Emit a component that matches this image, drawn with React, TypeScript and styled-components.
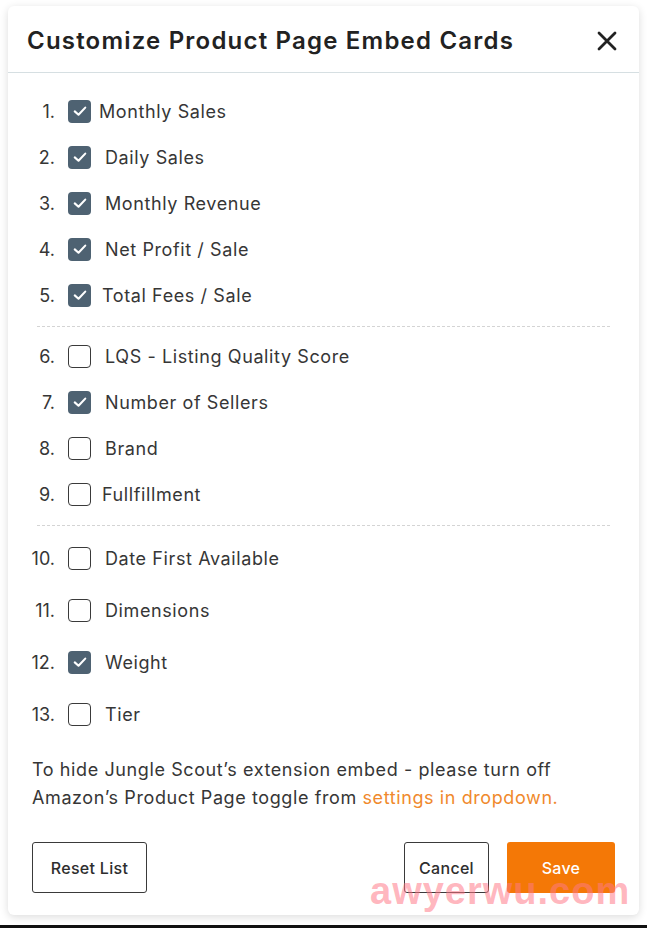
import React, { useState } from "react";
import styled, { createGlobalStyle } from "styled-components";

const GlobalStyle = createGlobalStyle`
  html, body {
    margin: 0;
    padding: 0;
    background: #ffffff;
  }

  body {
    font-family: Inter, "Open Sans", "Liberation Sans", sans-serif;
    color: #333;
  }
`;

const Page = styled.div`
  position: relative;
  width: 647px;
  height: 928px;
  box-sizing: border-box;
  padding: 6px 8px 0 8px;
  border-bottom: 3px solid #111;
  overflow: hidden;
`;

const Card = styled.div`
  width: 631px;
  height: 909px;
  box-sizing: border-box;
  background: #fff;
  border-radius: 6px;
  box-shadow: 0 2px 8px rgba(0, 0, 0, 0.14);
  display: flex;
  flex-direction: column;
`;

const Header = styled.header`
  height: 67px;
  box-sizing: border-box;
  display: flex;
  align-items: center;
  justify-content: space-between;
  padding: 3px 20px 0 19px;
  border-bottom: 1px solid #d6dfe2;

  h1 {
    margin: 0;
    font-size: 24px;
    font-weight: 600;
    color: #222;
    letter-spacing: 1.2px;
  }
`;

const CloseButton = styled.button`
  all: unset;
  width: 24px;
  height: 24px;
  display: grid;
  place-items: center;
  cursor: pointer;
`;

const List = styled.div`
  padding: 15px 29px 0 22px;
  display: flex;
  flex-direction: column;
`;

const Group = styled.div<{ $rowHeight: number }>`
  display: flex;
  flex-direction: column;

  & > label {
    height: ${({ $rowHeight }) => $rowHeight}px;
  }
`;

const Divider = styled.hr`
  margin: 8px 0 6px 7px;
  border: none;
  border-top: 1px dashed #d4d4d4;
`;

const Row = styled.label<{ $indent: number }>`
  display: flex;
  align-items: center;
  font-size: 18px;
  letter-spacing: 0.6px;
  color: #363636;
  cursor: pointer;

  .num {
    width: 25px;
    text-align: right;
    margin-right: 13px;
    letter-spacing: 0;
  }

  .text {
    margin-left: ${({ $indent }) => $indent}px;
  }
`;

const Box = styled.span<{ $checked: boolean }>`
  width: 23px;
  height: 23px;
  box-sizing: border-box;
  border-radius: 4px;
  display: grid;
  place-items: center;
  background: ${({ $checked }) => ($checked ? "#4e6272" : "#fff")};
  border: ${({ $checked }) =>
    $checked ? "none" : "1.5px solid #3a3a3a"};
`;

const Note = styled.p`
  margin: 16px 24px 0 24px;
  font-size: 18px;
  line-height: 28px;
  letter-spacing: 0.6px;
  color: #363636;

  a {
    color: #f0892c;
    text-decoration: none;
  }
`;

const Footer = styled.footer`
  margin-top: 30px;
  padding: 0 24px;
  display: flex;
  align-items: center;
  gap: 18px;

  .spacer {
    flex: 1;
  }
`;

const Button = styled.button<{ $primary?: boolean; $width: number }>`
  width: ${({ $width }) => $width}px;
  height: 51px;
  border-radius: 3px;
  font-family: inherit;
  font-size: 16px;
  font-weight: 500;
  letter-spacing: 0.3px;
  cursor: pointer;
  color: ${({ $primary }) => ($primary ? "#fff" : "#2e2e2e")};
  background: ${({ $primary }) => ($primary ? "#f47806" : "#fff")};
  border: ${({ $primary }) => ($primary ? "none" : "1.5px solid #3a3a3a")};
`;

const Watermark = styled.div`
  position: absolute;
  left: 370px;
  top: 870px;
  font-family: "Liberation Sans", Arial, sans-serif;
  font-size: 38px;
  font-weight: 700;
  color: rgba(255, 120, 135, 0.55);
  letter-spacing: 1px;
  pointer-events: none;
`;

type Item = { label: string; checked: boolean; indent: number };

const initialGroups: { rowHeight: number; items: Item[] }[] = [
  {
    rowHeight: 46,
    items: [
      { label: "Monthly Sales", checked: true, indent: 8 },
      { label: "Daily Sales", checked: true, indent: 14 },
      { label: "Monthly Revenue", checked: true, indent: 14 },
      { label: "Net Profit / Sale", checked: true, indent: 14 },
      { label: "Total Fees / Sale", checked: true, indent: 11 },
    ],
  },
  {
    rowHeight: 46,
    items: [
      { label: "LQS - Listing Quality Score", checked: false, indent: 14 },
      { label: "Number of Sellers", checked: true, indent: 14 },
      { label: "Brand", checked: false, indent: 14 },
      { label: "Fullfillment", checked: false, indent: 11 },
    ],
  },
  {
    rowHeight: 52,
    items: [
      { label: "Date First Available", checked: false, indent: 14 },
      { label: "Dimensions", checked: false, indent: 14 },
      { label: "Weight", checked: true, indent: 14 },
      { label: "Tier", checked: false, indent: 14 },
    ],
  },
];

function Check() {
  return (
    <svg width="18" height="18" viewBox="0 0 24 24">
      <polyline
        points="5,12.5 10,17 19,7.5"
        fill="none"
        stroke="#fff"
        strokeWidth="2.8"
        strokeLinecap="round"
        strokeLinejoin="round"
      />
    </svg>
  );
}

export default function App() {
  const [groups, setGroups] = useState(initialGroups);

  const toggle = (g: number, i: number) => {
    setGroups((prev) =>
      prev.map((group, gi) =>
        gi !== g
          ? group
          : {
              ...group,
              items: group.items.map((item, ii) =>
                ii === i ? { ...item, checked: !item.checked } : item
              ),
            }
      )
    );
  };

  let n = 0;

  return (
    <>
      <GlobalStyle />
      <Page>
        <Card>
          <Header>
            <h1>Customize Product Page Embed Cards</h1>
            <CloseButton aria-label="Close">
              <svg width="20" height="20" viewBox="0 0 20 20">
                <path
                  d="M2 2 L18 18 M18 2 L2 18"
                  stroke="#222"
                  strokeWidth="2.8"
                  strokeLinecap="round"
                />
              </svg>
            </CloseButton>
          </Header>
          <List>
            {groups.map((group, g) => (
              <React.Fragment key={g}>
                {g > 0 && <Divider />}
                <Group $rowHeight={group.rowHeight}>
                  {group.items.map((item, i) => {
                    n += 1;
                    return (
                      <Row
                        key={item.label}
                        $indent={item.indent}
                        onClick={() => toggle(g, i)}>
                        <span className="num">{n}.</span>
                        <Box $checked={item.checked}>
                          {item.checked && <Check />}
                        </Box>
                        <span className="text">{item.label}</span>
                      </Row>
                    );
                  })}
                </Group>
              </React.Fragment>
            ))}
          </List>
          <Note>
            To hide Jungle Scout’s extension embed - please turn off
            Amazon’s Product Page toggle from{" "}
            <a href="#settings">settings in dropdown.</a>
          </Note>
          <Footer>
            <Button $width={115}>Reset List</Button>
            <span className="spacer" />
            <Button $width={85}>Cancel</Button>
            <Button $primary $width={108}>
              Save
            </Button>
          </Footer>
        </Card>
        <Watermark>awyerwu.com</Watermark>
      </Page>
    </>
  );
}
